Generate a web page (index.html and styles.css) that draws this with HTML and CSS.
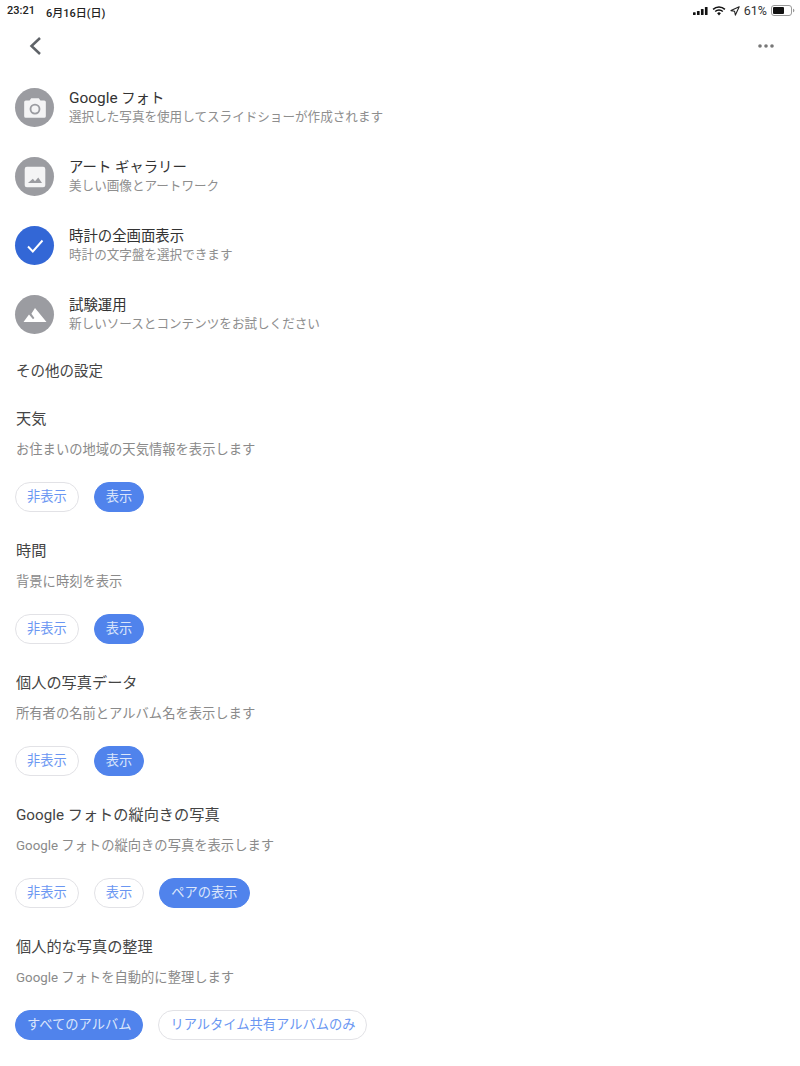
FILE: index.html
```html
<!DOCTYPE html>
<html lang="ja">
<head>
<meta charset="utf-8">
<title>設定</title>
<link rel="stylesheet" href="styles.css">
</head>
<body>
<div class="status">
  <div class="status-left"><span>23:21</span><span>6月16日(日)</span></div>
  <div class="status-right">
    <svg class="sig" width="15" height="8" viewBox="0 0 17 9"><rect x="0" y="6" width="3" height="3" rx=".6"/><rect x="4.500" y="4.500" width="3" height="4.500" rx=".6"/><rect x="9" y="2.300" width="3" height="6.700" rx=".6"/><rect x="13.500" y="0" width="3" height="9" rx=".6"/></svg>
    <svg class="wifi" width="14" height="10" viewBox="0 0 13 10"><path d="M.6 3.400a8.400 8.400 0 0 1 11.800 0" fill="none" stroke="#111" stroke-width="1.500"/><path d="M2.700 5.500a5.400 5.400 0 0 1 7.600 0" fill="none" stroke="#111" stroke-width="1.500"/><path d="M4.600 7.300a2.700 2.700 0 0 1 3.800 0L6.500 9.600z" fill="#111"/></svg>
    <svg class="loc" width="10" height="10" viewBox="0 0 10 10"><path d="M9.200.8 1 4.600l3.600.7.8 3.800z" fill="none" stroke="#222" stroke-width="1.100" stroke-linejoin="round"/></svg>
    <span class="pct">61%</span>
    <svg class="bat" width="24" height="11" viewBox="0 0 24 11"><rect x=".5" y=".5" width="20" height="10" rx="2.500" fill="none" stroke="#999"/><rect x="2" y="2" width="11" height="7" rx="1" fill="#111"/><path d="M22 3.700c1 .3 1.400 1 1.400 1.800s-.4 1.500-1.400 1.800z" fill="#999"/></svg>
  </div>
</div>
<header class="nav">
  <svg class="back" width="14" height="20" viewBox="0 0 14 20"><path d="M12 2 3.500 10l8.500 8" fill="none" stroke="#5f6368" stroke-width="2.500"/></svg>
  <svg class="more" width="16" height="4" viewBox="0 0 16 4"><circle cx="2" cy="2" r="1.800"/><circle cx="8" cy="2" r="1.800"/><circle cx="14" cy="2" r="1.800"/></svg>
</header>
<main>
  <ul class="sources">
    <li class="source">
      <span class="badge"><svg width="26" height="26" viewBox="0 0 24 24"><path fill="#f4f4f5" fill-rule="evenodd" d="M8.500 3 7 5H3.500A1.500 1.500 0 0 0 2 6.500v13A1.500 1.500 0 0 0 3.500 21h17a1.500 1.500 0 0 0 1.500-1.500v-13A1.500 1.500 0 0 0 20.500 5H17l-1.500-2zM12 8a5 5 0 1 1 0 10 5 5 0 0 1 0-10zm0 1.700a3.300 3.300 0 1 0 0 6.600 3.300 3.300 0 0 0 0-6.600z"/></svg></span>
      <div><div class="source-title"><span class="latin">Google</span> フォト</div><div class="source-sub">選択した写真を使用してスライドショーが作成されます</div></div>
    </li>
    <li class="source">
      <span class="badge"><svg width="26" height="26" viewBox="0 0 24 24"><path fill="#f4f4f5" fill-rule="evenodd" d="M4.500 2.500h15a2 2 0 0 1 2 2v15a2 2 0 0 1-2 2h-15a2 2 0 0 1-2-2v-15a2 2 0 0 1 2-2zM5.500 17.500h13l-3.500-5-3 3.500-2-2.500z"/></svg></span>
      <div><div class="source-title">アート ギャラリー</div><div class="source-sub">美しい画像とアートワーク</div></div>
    </li>
    <li class="source">
      <span class="badge badge-on"><svg width="24" height="24" viewBox="0 0 24 24"><path d="M5 12.500 9.800 17.500 19.500 6.500" fill="none" stroke="#fff" stroke-width="1.900"/></svg></span>
      <div><div class="source-title">時計の全画面表示</div><div class="source-sub">時計の文字盤を選択できます</div></div>
    </li>
    <li class="source">
      <span class="badge"><svg width="28" height="28" viewBox="0 0 28 28"><path fill="#fff" d="M14 7 25.500 21H2.500L8 13.500l4 4.700 1.400-1.200-3-4.300z"/></svg></span>
      <div><div class="source-title">試験運用</div><div class="source-sub">新しいソースとコンテンツをお試しください</div></div>
    </li>
  </ul>
  <h2 class="more-title">その他の設定</h2>
  <section class="setting">
    <h3>天気</h3><p>お住まいの地域の天気情報を表示します</p>
    <div class="chips"><span class="chip">非表示</span><span class="chip on">表示</span></div>
  </section>
  <section class="setting">
    <h3>時間</h3><p>背景に時刻を表示</p>
    <div class="chips"><span class="chip">非表示</span><span class="chip on">表示</span></div>
  </section>
  <section class="setting">
    <h3>個人の写真データ</h3><p>所有者の名前とアルバム名を表示します</p>
    <div class="chips"><span class="chip">非表示</span><span class="chip on">表示</span></div>
  </section>
  <section class="setting">
    <h3>Google フォトの縦向きの写真</h3><p>Google フォトの縦向きの写真を表示します</p>
    <div class="chips"><span class="chip">非表示</span><span class="chip">表示</span><span class="chip on">ペアの表示</span></div>
  </section>
  <section class="setting">
    <h3>個人的な写真の整理</h3><p>Google フォトを自動的に整理します</p>
    <div class="chips"><span class="chip on">すべてのアルバム</span><span class="chip">リアルタイム共有アルバムのみ</span></div>
  </section>
</main>
</body>
</html>
```
FILE: styles.css
```css
* { box-sizing: border-box; }
html, body { margin: 0; padding: 0; }
body {
  width: 800px;
  height: 1066px;
  overflow: hidden;
  background: #fff;
  font-family: Roboto, "Noto Sans CJK JP", sans-serif;
  color: #3c4043;
}
.status {
  height: 20px;
  padding: 0 5px 0 7px;
  display: flex;
  justify-content: space-between;
  align-items: center;
  font-size: 11px;
  font-weight: 500;
  color: #222;
}
.status-left { display: flex; gap: 11px; padding-top: 3px; }
.status-right { display: flex; align-items: center; gap: 4px; padding-top: 1px; }
.pct { font-size: 12.500px; font-weight: 400; color: #333; }
.sig { fill: #111; }
.nav {
  height: 52px;
  padding: 0 26px 0 28px;
  display: flex;
  justify-content: space-between;
  align-items: center;
}
.more { fill: #777; }
main { padding: 0 15px; }
.sources { list-style: none; margin: 0; padding: 0; }
.source {
  height: 69px;
  display: flex;
  align-items: center;
  gap: 15px;
}
.badge {
  width: 39px;
  height: 39px;
  margin-top: 2px;
  border-radius: 50%;
  background: #9b9ca1;
  flex: none;
  display: flex;
  align-items: center;
  justify-content: center;
}
.badge-on { background: #3367d6; }
.source-title { font-size: 14.400px; line-height: 19px; color: #333; }
.latin { font-size: 15.400px; }
.source-sub { font-size: 12.580px; line-height: 17px; color: #8e8e8e; }
.more-title {
  margin: 0;
  padding: 14px 0 0 1px;
  height: 61px;
  font-size: 14.500px;
  font-weight: 400;
  line-height: 20px;
  color: #444;
}
.setting { height: 132px; }
.setting h3 { margin: 0; padding-left: 1px; font-size: 15.200px; font-weight: 400; line-height: 20px; height: 20px; color: #444; }
.setting p { margin: 11px 0 0; padding-left: 1px; font-size: 13.300px; line-height: 20px; height: 20px; color: #8a8a8a; }
.chips { display: flex; gap: 15px; margin-top: 22px; }
.chip {
  height: 30px;
  padding: 0 11px;
  border: 1px solid #e2e2e6;
  border-radius: 15px;
  font-size: 13.250px;
  line-height: 28px;
  color: #6a96f2;
  background: #fff;
}
.chip.on { background: #5083ec; border-color: #5083ec; color: #dbe6fb; }
```
